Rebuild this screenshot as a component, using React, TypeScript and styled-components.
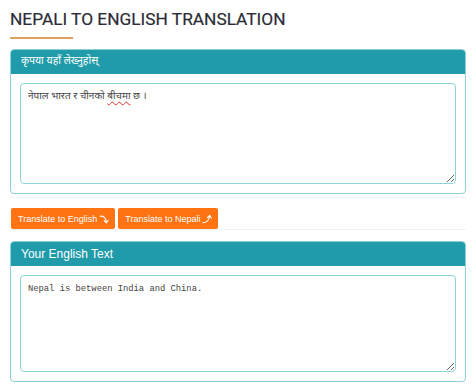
import React from 'react'
import styled, { createGlobalStyle } from 'styled-components'

const GlobalStyle = createGlobalStyle`
    html, body {
        margin: 0;
        padding: 0;
        background: #ffffff;
    }
    body {
        font-family: "Liberation Sans", Arial, sans-serif;
    }
`

// small curved arrows drawn next to the button labels
const ArrowDown = () => (
    <ArrowIcon viewBox="0 0 10 10">
        <path d="M1 2.2 C4.5 1.8 7 3.5 7.4 8.4" />
        <path d="M5.2 6.6 L7.4 8.8 L9.2 6.2" />
    </ArrowIcon>
)

const ArrowUp = () => (
    <ArrowIcon viewBox="0 0 10 10">
        <path d="M1 8.6 C4.5 8.8 7 6.8 7.6 1.8" />
        <path d="M5.4 3.6 L7.6 1.4 L9.4 4" />
    </ArrowIcon>
)

export default function App() {
    return (
        <Page>
            <GlobalStyle />
            <Title>NEPALI TO ENGLISH TRANSLATION</Title>
            <TitleRule />

            <Panel>
                <PanelHeader>कृपया यहाँ लेख्नुहोस्</PanelHeader>
                <PanelBody>
                    <TextBox $height={101} $nepali>
                        नेपाल भारत र चीनको <Misspelt>बीचमा</Misspelt> छ ।
                    </TextBox>
                </PanelBody>
            </Panel>

            <ButtonBar>
                <ActionButton>
                    Translate to English <ArrowDown />
                </ActionButton>
                <ActionButton>
                    Translate to Nepali <ArrowUp />
                </ActionButton>
            </ButtonBar>

            <Panel $gap={11}>
                <PanelHeader $latin>Your English Text</PanelHeader>
                <PanelBody>
                    <TextBox $height={97}>Nepal is between India and China.</TextBox>
                </PanelBody>
            </Panel>
        </Page>
    )
}

const Page = styled.div`
    width: 456px;
    padding: 8px 10px 10px;
`

const Title = styled.h1`
    font-family: Roboto, "Open Sans", sans-serif;
    font-weight: 400;
    font-size: 17.3px;
    line-height: 22px;
    color: #2b2c35;
    margin: 0;
    -webkit-text-stroke: 0.2px #2b2c35;
`

const TitleRule = styled.div`
    width: 63px;
    height: 2px;
    background: #dba35c;
    margin-top: 7px;
`

const Panel = styled.section<{ $gap?: number }>`
    margin-top: ${(p) => p.$gap ?? 10}px;
    border: 1px solid #8ccfd5;
    border-radius: 4px;
    overflow: hidden;
`

const PanelHeader = styled.div<{ $latin?: boolean }>`
    height: 24px;
    background: #1f9ba9;
    color: #ffffff;
    font-family: ${(p) => (p.$latin ? '"Liberation Sans", Arial' : '"Noto Sans Devanagari", "Lohit Devanagari", "Noto Sans"')}, sans-serif;
    font-size: ${(p) => (p.$latin ? 12 : 10.5)}px;
    line-height: 24px;
    padding: 0 10px;
`

const PanelBody = styled.div`
    padding: 9px;
`

const TextBox = styled.div<{ $height: number; $nepali?: boolean }>`
    box-sizing: border-box;
    height: ${(p) => p.$height}px;
    border: 1px solid #8ed1d6;
    border-radius: 4px;
    padding: 6px 7px;
    font-family: ${(p) => (p.$nepali ? '"Noto Sans Devanagari", "Lohit Devanagari", "Noto Serif Devanagari"' : '"Liberation Mono", "Courier New"')}, monospace;
    font-size: ${(p) => (p.$nepali ? 10 : 8.8)}px;
    line-height: 14px;
    color: #444444;
    overflow: auto;
    resize: vertical;
`

const Misspelt = styled.span`
    text-decoration: underline wavy #e03030;
    text-decoration-thickness: 1px;
    text-underline-offset: 2px;
`

const ButtonBar = styled.div`
    display: flex;
    gap: 3px;
    margin-top: 3px;
    padding: 10px 1px 0;
    border-top: 1px solid #f1f4f6;
    border-bottom: 1px solid #eef2f4;
`

const ActionButton = styled.button`
    height: 21px;
    padding: 0 6px 0 7px;
    border: none;
    border-radius: 2px;
    background: #ff7313;
    color: #ffffff;
    font-family: "Liberation Sans", Arial, sans-serif;
    font-size: 9px;
    display: flex;
    align-items: center;
    gap: 2px;
    cursor: pointer;
`

const ArrowIcon = styled.svg`
    width: 10px;
    height: 10px;
    fill: none;
    stroke: #ffffff;
    stroke-width: 1.1;
    stroke-linecap: round;
    stroke-linejoin: round;
`
